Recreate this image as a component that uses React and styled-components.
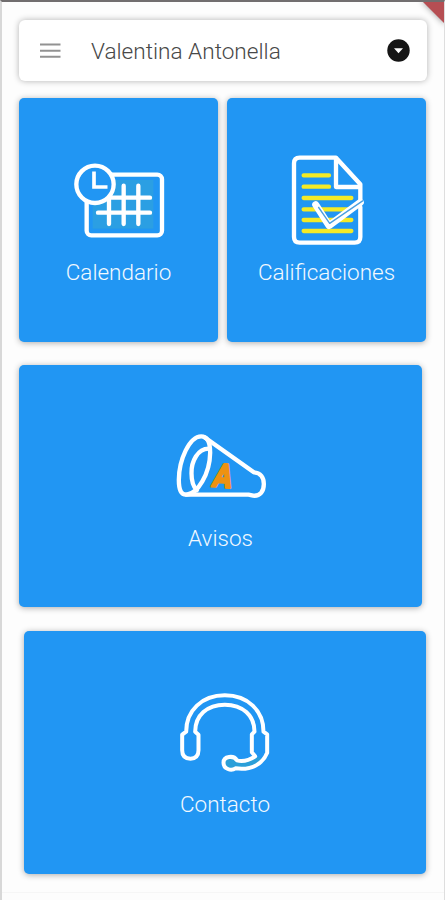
import React from "react";
import styled, { createGlobalStyle } from "styled-components";

const GlobalStyle = createGlobalStyle`
    * {
        box-sizing: border-box;
    }
    body {
        margin: 0;
        background: #fdfdfd;
        font-family: Roboto, sans-serif;
    }
    `;
const Screen = styled.div`
    position: relative;
    width: 445px;
    height: 900px;
    overflow: hidden;
    display: flex;
    flex-direction: column;
    padding: 18px 17px 0 17px;
    background: #fdfdfd;
    border-top: 2px solid #716e6f;
    border-left: 2px solid #d8d8d8;
    border-right: 1px solid #dedede;
    `;
const Ribbon = styled.div`
    position: absolute;
    top: -2px;
    right: -1px;
    width: 25px;
    height: 25px;
    background: linear-gradient(#5f2429 2px, #b64e53 2px);
    clip-path: polygon(0 0, 100% 0, 100% 100%);
    `;
const RibbonShadow = styled.div`
    position: absolute;
    top: 0;
    right: -1px;
    width: 25px;
    height: 25px;
    filter: drop-shadow(0 0 3px rgba(0, 0, 0, 0.4));
    `;
const TopBar = styled.header`
    display: flex;
    align-items: center;
    width: 408px;
    height: 61px;
    flex-shrink: 0;
    padding: 0 17px 0 20px;
    background: #fff;
    border-radius: 6px;
    box-shadow: 0 0 6px rgba(0, 0, 0, 0.3);
    `;
const MenuIcon = styled.svg`
    width: 22px;
    height: 16px;
    margin-right: 30px;
    `;
const UserName = styled.div`
    flex: 1;
    padding-top: 2px;
    color: #484848;
    font-size: 22.6px;
    font-weight: 300;
    line-height: 28px;
    white-space: nowrap;
    `;
const DropIcon = styled.svg`
    width: 23px;
    height: 23px;
    `;
const CardRow = styled.div`
    display: flex;
    flex-shrink: 0;
    gap: 9px;
    margin-top: ${props => props.$top}px;
    margin-left: ${props => props.$left || 0}px;
    `;
const Card = styled.div`
    display: flex;
    flex-direction: column;
    align-items: center;
    width: ${props => props.$width}px;
    height: ${props => props.$height}px;
    padding-top: 52px;
    background: #2196f3;
    border-radius: 5px;
    box-shadow: 0 1px 6px rgba(0, 0, 0, 0.32);
    `;
const CardIcon = styled.svg`
    width: 98px;
    height: 98px;
    fill: none;
    stroke: #fff;
    stroke-width: ${props => props.$stroke || 13};
    stroke-linecap: round;
    stroke-linejoin: round;
    `;
const CardLabel = styled.div`
    margin-top: ${props => (props.$wide ? 9 : 10)}px;
    color: #f2f9ff;
    font-size: 22.5px;
    font-weight: 300;
    line-height: 28px;
    `;
const Footer = styled.div`
    height: 9px;
    margin: 18px -17px 0;
    border-top: 1px solid #f6f6f6;
    `;

const CalendarIcon = () => (
    <CardIcon viewBox="30 0 294 294">
        <rect x="98" y="90" width="182" height="146" fill="#2b9fe3" stroke="none" />
        <rect x="80" y="74" width="226" height="182" rx="14" />
        <path d="M147 150V222M191 107V222M235 107V222M114 143H270M114 188H270" />
        <circle cx="105" cy="103" r="56" fill="#2196f3" />
        <path d="M102 70V111H137" strokeLinecap="square" strokeLinejoin="miter" strokeWidth="11" />
    </CardIcon>
);

const GradesIcon = () => (
    <CardIcon viewBox="84 15 294 294">
        <path d="M331 186V276Q331 293 314 293H149Q132 293 132 276V55Q132 38 149 38H258L331 118V168M258 38V126H331" />
        <path
            d="M161 91H237M161 125H237M161 159H304M161 193H304M161 225H304M161 258H304"
            stroke="#f4ea26"
        />
        <path d="M197 179L237 242L331 172" strokeWidth="21" />
        <path d="M205 186L239 235L339 167" stroke="#4a9fe0" strokeWidth="4" strokeLinecap="butt" />
    </CardIcon>
);

const MegaphoneIcon = () => (
    <CardIcon viewBox="34.5 -9 294 294">
        <path d="M122 49C87 49 55 120 55 180C55 210 62 225 78 224C111 222 148 162 149 98C149 67 140 49 122 49Z" />
        <path d="M147 86C111 84 92 126 93 160C93 182 98 200 109 211" />
        <path d="M132 52L280 157C300 158 310 172 310 192C310 214 299 229 278 227L264 224H78" />
        <text
            x="152"
            y="199"
            fill="#ee9211"
            stroke="#ee9211"
            strokeWidth="7"
            fontFamily="Roboto"
            fontSize="93"
            fontWeight="700"
            transform="translate(152 199) skewX(-8) rotate(5) scale(0.92 1.04) translate(-152 -199)"
        >
            A
        </text>
    </CardIcon>
);

const HeadsetIcon = () => (
    <CardIcon viewBox="34.5 9 294 294" $stroke={12}>
        <path
            d="M282 231C260 240 246 247 218 243C208 225 177 228 177 249C177 271 205 272 213 265C245 271 280 263 298 239Z"
            fill="#2b9fd8"
            stroke="none"
        />
        <path d="M65 155C65 92 112 46 181 46C250 46 297 92 297 155L308 163V218C296 248 266 272 213 265C200 274 177 267 177 248C177 228 208 225 217 241C237 246 252 242 272 229L262 217V163L270 155C270 106 234 74 181 74C128 74 92 106 92 155L102 164V211C102 227 93 236 78 236C62 236 53 227 53 211V164Z" />
    </CardIcon>
);

const App = () => {
    return (
        <>
            <GlobalStyle />
            <Screen>
                <RibbonShadow>
                    <Ribbon />
                </RibbonShadow>
                <TopBar>
                    <MenuIcon viewBox="0 0 22 16">
                        <path d="M1 1.5H21.5M1 7.7H21.5M1 13.7H21.5" stroke="#929292" strokeWidth="2" />
                    </MenuIcon>
                    <UserName>Valentina Antonella</UserName>
                    <DropIcon viewBox="0 0 23 23">
                        <circle cx="11.5" cy="11.5" r="11.2" fill="#151515" />
                        <path d="M7 9.3H16L11.5 14.3Z" fill="#fff" />
                    </DropIcon>
                </TopBar>
                <CardRow $top={17}>
                    <Card $width={199} $height={244}>
                        <CalendarIcon />
                        <CardLabel>Calendario</CardLabel>
                    </Card>
                    <Card $width={199} $height={244}>
                        <GradesIcon />
                        <CardLabel>Calificaciones</CardLabel>
                    </Card>
                </CardRow>
                <CardRow $top={23}>
                    <Card $width={403} $height={242}>
                        <MegaphoneIcon />
                        <CardLabel $wide>Avisos</CardLabel>
                    </Card>
                </CardRow>
                <CardRow $top={24} $left={5}>
                    <Card $width={402} $height={243}>
                        <HeadsetIcon />
                        <CardLabel $wide>Contacto</CardLabel>
                    </Card>
                </CardRow>
                <Footer />
            </Screen>
        </>
    );
};

export default App;
